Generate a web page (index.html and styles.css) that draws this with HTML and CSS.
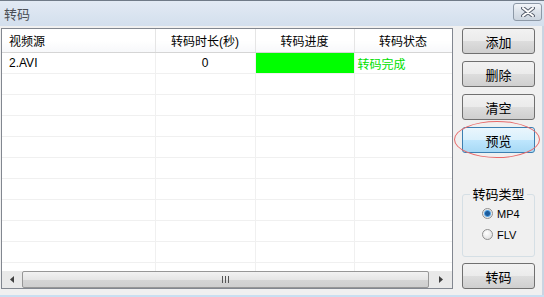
FILE: index.html
```html
<!DOCTYPE html>
<html lang="zh-CN">
<head>
    <meta charset="UTF-8">
    <title>转码</title>
    <link rel="stylesheet" href="styles.css">
</head>
<body>
    <div class="window">
        <div class="titlebar">
            <span class="title">转码</span>
            <span class="close">
                <svg width="14" height="10" viewBox="0 0 14 10">
                    <path d="M2 1 L12 9 M12 1 L2 9" stroke="#5a6270" stroke-width="4" stroke-linecap="round"/>
                    <path d="M2 1 L12 9 M12 1 L2 9" stroke="#ffffff" stroke-width="2" stroke-linecap="round"/>
                </svg>
            </span>
        </div>
        <div class="client">
            <div class="listview">
                <div class="list-body">
                    <table>
                        <colgroup>
                            <col class="c1"><col class="c2"><col class="c3"><col class="c4">
                        </colgroup>
                        <thead>
                            <tr>
                                <th class="left">视频源</th>
                                <th>转码时长(秒)</th>
                                <th>转码进度</th>
                                <th>转码状态</th>
                            </tr>
                        </thead>
                        <tbody>
                            <tr>
                                <td class="left">2.AVI</td>
                                <td class="center">0</td>
                                <td class="progress"></td>
                                <td class="done">转码完成</td>
                            </tr>
                            <tr><td></td><td></td><td></td><td></td></tr>
                            <tr><td></td><td></td><td></td><td></td></tr>
                            <tr><td></td><td></td><td></td><td></td></tr>
                            <tr><td></td><td></td><td></td><td></td></tr>
                            <tr><td></td><td></td><td></td><td></td></tr>
                            <tr><td></td><td></td><td></td><td></td></tr>
                            <tr><td></td><td></td><td></td><td></td></tr>
                            <tr><td></td><td></td><td></td><td></td></tr>
                            <tr><td></td><td></td><td></td><td></td></tr>
                            <tr><td></td><td></td><td></td><td></td></tr>
                        </tbody>
                    </table>
                </div>
                <div class="hscroll">
                    <span class="arrow">
                        <svg width="4" height="7" viewBox="0 0 4 7"><path d="M4 0 L0 3.5 L4 7 Z" fill="#404040"/></svg>
                    </span>
                    <span class="thumb"><span class="grip"></span></span>
                    <span class="arrow">
                        <svg width="4" height="7" viewBox="0 0 4 7"><path d="M0 0 L4 3.5 L0 7 Z" fill="#404040"/></svg>
                    </span>
                </div>
            </div>
            <div class="side">
                <button class="btn">添加</button>
                <button class="btn">删除</button>
                <button class="btn">清空</button>
                <button class="btn hot">预览<span class="mark"></span></button>
                <fieldset class="group">
                    <legend>转码类型</legend>
                    <label class="radio"><span class="dot on"></span>MP4</label>
                    <label class="radio"><span class="dot"></span>FLV</label>
                </fieldset>
                <button class="btn go">转码</button>
            </div>
        </div>
    </div>
</body>
</html>
```

FILE: styles.css
```css
body {
    margin: 0;
    font-family: "Liberation Sans", "Noto Sans CJK SC", sans-serif;
    font-size: 12px;
}
.window {
    width: 544px;
    height: 297px;
    box-sizing: border-box;
    background-color: #f0f0f0;
    border-bottom: 2px solid #c9dff1;
    overflow: hidden;
}
.titlebar {
    border-top: 1px solid #707b88;
    background: linear-gradient(#e2eaf4, #d3dfed);
    display: flex;
    align-items: center;
    justify-content: space-between;
    padding: 0 2px 0 4px;
    box-sizing: border-box;
    height: 26px;
}
.title {
    color: #4b4f55;
    font-size: 13px;
}
.close {
    width: 27px;
    height: 16px;
    border: 1px solid #8d99a7;
    border-radius: 3px;
    background: linear-gradient(#f2f5f9, #dbe2ea 50%, #ccd5df);
    display: flex;
    align-items: center;
    justify-content: center;
    margin-top: -3px;
}
.client {
    display: flex;
    padding: 2px 0 0 1px;
    border-right: 2px solid #c9d5e2;
    height: 269px;
}
.listview {
    width: 452px;
    height: 261px;
    box-sizing: border-box;
    border: 1px solid #828790;
    background-color: #fff;
    display: flex;
    flex-direction: column;
}
.list-body {
    flex: 1;
    overflow: hidden;
}
table {
    border-collapse: collapse;
    table-layout: fixed;
    width: 450px;
}
.c1 { width: 153px; }
.c2 { width: 100px; }
.c3 { width: 99px; }
.c4 { width: 98px; }
th {
    height: 23px;
    font-weight: normal;
    color: #000;
    text-align: center;
    background: linear-gradient(#ffffff 50%, #f7f8fa);
    border-right: 1px solid #e5e5e5;
    border-bottom: 1px solid #d5d5d5;
    padding: 0;
}
td {
    height: 20px;
    padding: 0;
    border-right: 1px solid #f0f0f0;
    border-bottom: 1px solid #f0f0f0;
    white-space: nowrap;
    overflow: hidden;
}
th.left, td.left {
    text-align: left;
    padding-left: 7px;
}
.center {
    text-align: center;
}
.progress {
    background-color: #00ff00;
}
.done {
    color: #00e000;
    padding-left: 3px;
}
.hscroll {
    height: 17px;
    display: flex;
    background-color: #e9e9e9;
}
.arrow {
    width: 20px;
    display: flex;
    align-items: center;
    justify-content: center;
}
.arrow:last-child {
    width: 23px;
}
.thumb {
    flex: 1;
    border: 1px solid #979797;
    border-radius: 2px;
    background: linear-gradient(#f2f2f2, #e6e6e6 50%, #d5d5d5 51%, #cfcfcf);
    display: flex;
    align-items: center;
    justify-content: center;
}
.grip {
    width: 7px;
    height: 7px;
    background: repeating-linear-gradient(90deg, #555 0 1px, transparent 1px 3px);
}
.side {
    display: flex;
    flex-direction: column;
    margin-left: 9px;
    width: 73px;
}
.btn {
    position: relative;
    height: 26px;
    margin-bottom: 7px;
    border: 1px solid #707070;
    border-radius: 3px;
    background: linear-gradient(#f2f2f2, #ebebeb 50%, #dddddd 51%, #cfcfcf);
    font-family: "Noto Sans CJK SC", sans-serif;
    font-size: 13px;
    color: #000;
    padding: 0;
}
.btn.hot {
    border-color: #3c7fb1;
    background: linear-gradient(#eaf6fd, #d9f0fc 50%, #bee6fd 51%, #a7d9f5);
}
.mark {
    position: absolute;
    left: -9px;
    top: -7px;
    width: 84px;
    height: 35px;
    border: 1px solid #e86a6a;
    border-radius: 50%;
}
.group {
    margin: 27px 0 0 0;
    padding: 2px 0 6px 0;
    border: 1px solid #d5dfe5;
    border-radius: 3px;
    height: 70px;
    box-sizing: border-box;
    min-width: 0;
}
.group legend {
    margin: 0 auto;
    padding: 0 2px;
    white-space: nowrap;
    font-family: "Noto Sans CJK SC", sans-serif;
    font-size: 13px;
    line-height: 14px;
    color: #000;
}
.radio {
    display: flex;
    align-items: center;
    height: 21px;
    padding-left: 19px;
    font-size: 11px;
    color: #000;
}
.dot {
    width: 11px;
    height: 11px;
    box-sizing: border-box;
    border: 1px solid #8f8f8f;
    border-radius: 50%;
    background: radial-gradient(circle at 40% 35%, #ffffff, #d8d8d8);
    margin-right: 4px;
}
.dot.on {
    background: radial-gradient(circle, #1b5b9c 0 2px, #57a5e5 3px, #e8e8e8 4px, #f4f4f4);
}
.btn.go {
    margin-top: 6px;
}
```
